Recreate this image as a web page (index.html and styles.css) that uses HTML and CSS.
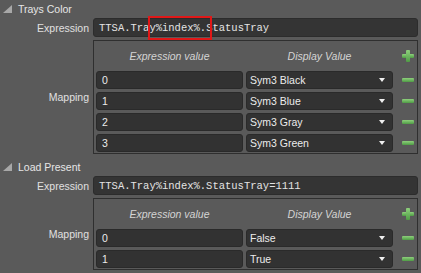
FILE: index.html
```html
<!DOCTYPE html>
<html lang="en">
<head>
    <meta charset="UTF-8">
    <title>Property Mapping</title>
    <link rel="stylesheet" href="styles.css">
</head>
<body>
    <div class="section">
        <div class="section-head">
            <svg class="caret" width="9" height="8" viewBox="0 0 9 8"><polygon points="9,0 9,8 0,8" fill="#a8a8a8"/></svg>
            <span>Trays Color</span>
        </div>
        <div class="field">
            <label class="field-label">Expression</label>
            <div class="expr">TTSA.Tray<span class="mark">%index%</span>.StatusTray</div>
        </div>
        <div class="field">
            <label class="field-label">Mapping</label>
            <div class="map-panel">
                <div class="map-head">
                    <span>Expression value</span>
                    <span>Display Value</span>
                    <span class="icon-cell"><span class="add"></span></span>
                </div>
                <div class="map-row">
                    <div class="cell">0</div>
                    <div class="cell select">Sym3 Black<span class="arrow"></span></div>
                    <span class="icon-cell"><span class="remove"></span></span>
                </div>
                <div class="map-row">
                    <div class="cell">1</div>
                    <div class="cell select">Sym3 Blue<span class="arrow"></span></div>
                    <span class="icon-cell"><span class="remove"></span></span>
                </div>
                <div class="map-row">
                    <div class="cell">2</div>
                    <div class="cell select">Sym3 Gray<span class="arrow"></span></div>
                    <span class="icon-cell"><span class="remove"></span></span>
                </div>
                <div class="map-row">
                    <div class="cell">3</div>
                    <div class="cell select">Sym3 Green<span class="arrow"></span></div>
                    <span class="icon-cell"><span class="remove"></span></span>
                </div>
            </div>
        </div>
    </div>

    <div class="section">
        <div class="section-head">
            <svg class="caret" width="9" height="8" viewBox="0 0 9 8"><polygon points="9,0 9,8 0,8" fill="#a8a8a8"/></svg>
            <span>Load Present</span>
        </div>
        <div class="field">
            <label class="field-label">Expression</label>
            <div class="expr">TTSA.Tray%index%.StatusTray=1111</div>
        </div>
        <div class="field">
            <label class="field-label">Mapping</label>
            <div class="map-panel">
                <div class="map-head">
                    <span>Expression value</span>
                    <span>Display Value</span>
                    <span class="icon-cell"><span class="add"></span></span>
                </div>
                <div class="map-row">
                    <div class="cell">0</div>
                    <div class="cell select">False<span class="arrow"></span></div>
                    <span class="icon-cell"><span class="remove"></span></span>
                </div>
                <div class="map-row">
                    <div class="cell">1</div>
                    <div class="cell select">True<span class="arrow"></span></div>
                    <span class="icon-cell"><span class="remove"></span></span>
                </div>
            </div>
        </div>
    </div>
</body>
</html>
```

FILE: styles.css
```css
* {
    margin: 0;
    padding: 0;
    box-sizing: border-box;
}

body {
    font-family: 'Liberation Sans', Arial, sans-serif;
    font-size: 10.5px;
    background-color: #5a5a5a;
    color: #e2e2e2;
    width: 421px;
    height: 273px;
    overflow: hidden;
    padding-right: 3px;
}

.section + .section {
    margin-top: 4px;
}

.section-head {
    height: 17px;
    display: flex;
    align-items: center;
    gap: 6px;
    padding-left: 3px;
    font-size: 10.5px;
    color: #e6e6e6;
}

.caret {
    margin-top: 1px;
}

.field {
    display: grid;
    grid-template-columns: 93px 1fr;
    align-items: center;
    margin-top: 1px;
}

.field + .field {
    margin-top: 3px;
}

.field-label {
    text-align: right;
    padding-right: 4px;
    color: #e0e0e0;
}

.expr {
    height: 19px;
    display: flex;
    align-items: center;
    padding-left: 5px;
    background-color: #343434;
    border: 1px solid #2c2c2c;
    border-radius: 3px;
    font-family: 'Liberation Mono', 'Courier New', monospace;
    font-size: 10.5px;
    color: #e4e4e4;
}

.mark {
    position: relative;
}

/* red annotation box drawn over the text */
.mark::after {
    content: "";
    position: absolute;
    left: -8px;
    right: -12px;
    top: -6px;
    bottom: -6px;
    border: 2px solid #e01818;
}

.map-panel {
    border: 1px solid #2f2f2f;
    padding: 0 0 1px 2px;
    display: flex;
    flex-direction: column;
    gap: 3px;
}

.map-head, .map-row {
    display: grid;
    grid-template-columns: 147px 147px 1fr;
    column-gap: 3px;
    align-items: center;
}

.map-head {
    height: 30px;
    margin-bottom: -3px;
    font-style: italic;
    color: #d4d4d4;
    text-align: center;
}

.map-row {
    height: 18px;
}

.cell {
    height: 18px;
    display: flex;
    align-items: center;
    padding-left: 5px;
    background-color: #323232;
    border: 1px solid #2a2a2a;
    border-radius: 3px;
    color: #ececec;
}

.select {
    padding-left: 3px;
    justify-content: space-between;
    padding-right: 7px;
}

.arrow {
    width: 0;
    height: 0;
    border-left: 3px solid transparent;
    border-right: 3px solid transparent;
    border-top: 4px solid #f0f0f0;
}

.icon-cell {
    display: flex;
    justify-content: center;
    align-items: center;
    padding-left: 2px;
}

.remove {
    width: 12px;
    height: 4px;
    background: linear-gradient(#8ed07c, #4f9c45);
    border-radius: 1px;
}

.add {
    position: relative;
    width: 12px;
    height: 12px;
}

.add::before, .add::after {
    content: "";
    position: absolute;
    background: linear-gradient(#8ed07c, #4f9c45);
    border-radius: 1px;
}

.add::before {
    left: 0;
    right: 0;
    top: 4px;
    height: 4px;
}

.add::after {
    top: 0;
    bottom: 0;
    left: 4px;
    width: 4px;
}
```
